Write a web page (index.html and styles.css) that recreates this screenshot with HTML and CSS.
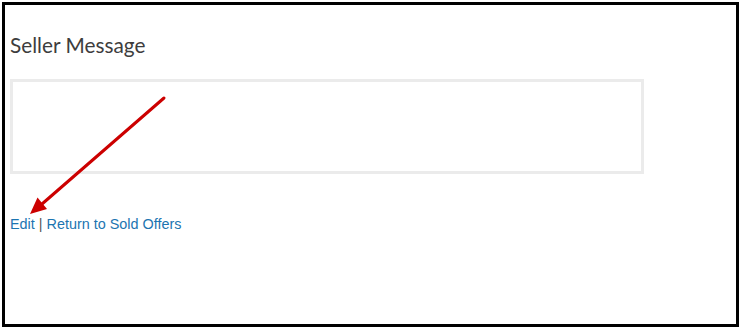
FILE: index.html
```html
<!DOCTYPE html>
<html>
<head>
<meta charset="utf-8">
<link rel="stylesheet" href="styles.css">
</head>
<body>
<div class="frame">
  <h2 class="title">Seller Message</h2>
  <div class="message-box"></div>
  <div class="links">
    <a href="#" class="link">Edit</a> <span class="sep">|</span> <a href="#" class="link">Return to Sold Offers</a>
  </div>
</div>
<svg class="annotation" width="740" height="328" viewBox="0 0 740 328">
  <line x1="164" y1="98" x2="42" y2="204" stroke="#cc0000" stroke-width="3" stroke-linecap="round"/>
  <polygon points="30,214 47,209 37.5,197.5" fill="#cc0000"/>
</svg>
</body>
</html>
```

FILE: styles.css
```css
html, body {
  margin: 0;
  padding: 0;
  background: #fff;
}
body {
  position: relative;
  width: 740px;
  height: 328px;
  overflow: hidden;
}
.frame {
  box-sizing: border-box;
  margin: 2px 0 0 2px;
  width: 737px;
  height: 325px;
  border: 3px solid #000;
  padding: 0 0 0 5px;
}
.title {
  margin: 28px 0 0 0;
  font-family: Lato, "Open Sans", sans-serif;
  font-weight: 400;
  font-size: 20.8px;
  line-height: 24px;
  color: #3d3d3d;
}
.message-box {
  box-sizing: border-box;
  margin-top: 22px;
  width: 634px;
  height: 95px;
  border: 3px solid #ebebeb;
  background: #fff;
}
.links {
  margin-top: 42px;
  font-family: "Liberation Sans", Arial, sans-serif;
  font-size: 14.4px;
  line-height: 16px;
  color: #555;
}
.link {
  color: #1c75b1;
  text-decoration: none;
}
.sep {
  color: #555;
}
.annotation {
  position: absolute;
  left: 0;
  top: 0;
  pointer-events: none;
}
```
